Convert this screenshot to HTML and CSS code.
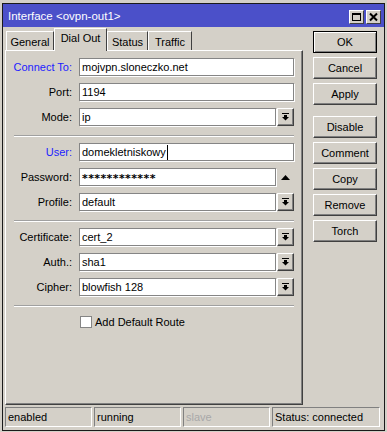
FILE: index.html
```html
<!DOCTYPE html>
<html>
<head>
<meta charset="utf-8">
<link rel="stylesheet" href="styles.css">
</head>
<body>
<div class="desk">
  <div class="window">
    <div class="titlebar">
      <span class="title">Interface &lt;ovpn-out1&gt;</span>
      <div class="tb-btns">
        <span class="tb-btn"><svg width="13" height="12" viewBox="0 0 13 12"><rect x="2.5" y="2.5" width="8" height="7" fill="none" stroke="#000"/><rect x="2" y="2" width="9" height="2" fill="#000"/></svg></span>
        <span class="tb-btn"><svg width="13" height="12" viewBox="0 0 13 12"><path d="M3 2.5 L10 9.5 M10 2.5 L3 9.5" stroke="#000" stroke-width="2"/></svg></span>
      </div>
    </div>
    <div class="main">
      <div class="left">
        <div class="tabs">
          <div class="tab t-general">General</div>
          <div class="tab active t-dial">Dial Out</div>
          <div class="tab t-status">Status</div>
          <div class="tab t-traffic">Traffic</div>
        </div>
        <div class="panel">
          <div class="row"><span class="label blue">Connect To:</span><div class="input">mojvpn.sloneczko.net</div></div>
          <div class="row"><span class="label">Port:</span><div class="input">1194</div></div>
          <div class="row"><span class="label">Mode:</span><div class="input short">ip</div><span class="drop"><svg width="7" height="8" viewBox="0 0 7 8"><rect x="0" y="0" width="7" height="1" fill="#000"/><rect x="2" y="2" width="3" height="2" fill="#000"/><path d="M0 4 H7 L3.5 7.5 Z" fill="#000"/></svg></span></div>
          <div class="sep"></div>
          <div class="row"><span class="label blue">User:</span><div class="input">domekletniskowy<span class="caret"></span></div></div>
          <div class="row"><span class="label">Password:</span><div class="input short pw">************</div><span class="updown"><svg width="9" height="5" viewBox="0 0 9 5"><path d="M0 5 H9 L4.5 0 Z" fill="#000"/></svg></span></div>
          <div class="row"><span class="label">Profile:</span><div class="input short">default</div><span class="drop"><svg width="7" height="8" viewBox="0 0 7 8"><rect x="0" y="0" width="7" height="1" fill="#000"/><rect x="2" y="2" width="3" height="2" fill="#000"/><path d="M0 4 H7 L3.5 7.5 Z" fill="#000"/></svg></span></div>
          <div class="sep"></div>
          <div class="row"><span class="label">Certificate:</span><div class="input short">cert_2</div><span class="drop"><svg width="7" height="8" viewBox="0 0 7 8"><rect x="0" y="0" width="7" height="1" fill="#000"/><rect x="2" y="2" width="3" height="2" fill="#000"/><path d="M0 4 H7 L3.5 7.5 Z" fill="#000"/></svg></span></div>
          <div class="row"><span class="label">Auth.:</span><div class="input short">sha1</div><span class="drop"><svg width="7" height="8" viewBox="0 0 7 8"><rect x="0" y="0" width="7" height="1" fill="#000"/><rect x="2" y="2" width="3" height="2" fill="#000"/><path d="M0 4 H7 L3.5 7.5 Z" fill="#000"/></svg></span></div>
          <div class="row"><span class="label">Cipher:</span><div class="input short">blowfish 128</div><span class="drop"><svg width="7" height="8" viewBox="0 0 7 8"><rect x="0" y="0" width="7" height="1" fill="#000"/><rect x="2" y="2" width="3" height="2" fill="#000"/><path d="M0 4 H7 L3.5 7.5 Z" fill="#000"/></svg></span></div>
          <div class="sep"></div>
          <div class="check-row"><span class="checkbox"></span><span>Add Default Route</span></div>
        </div>
      </div>
      <div class="buttons">
        <div class="btn default">OK</div>
        <div class="btn">Cancel</div>
        <div class="btn">Apply</div>
        <div class="btn spaced">Disable</div>
        <div class="btn">Comment</div>
        <div class="btn">Copy</div>
        <div class="btn">Remove</div>
        <div class="btn">Torch</div>
      </div>
    </div>
    <div class="statusbar">
      <div class="field">enabled</div>
      <div class="field">running</div>
      <div class="field disabled">slave</div>
      <div class="field wide">Status: connected</div>
    </div>
  </div>
</div>
</body>
</html>
```
FILE: styles.css
```css
html, body {
  margin: 0;
  padding: 0;
}
body {
  background: #d4d0c8;
  font: 11px "Liberation Sans", Arial, sans-serif;
  color: #000;
}
.desk {
  padding: 3px 0 0 2px;
  height: 432px;
  box-sizing: border-box;
}
.window {
  width: 383px;
  height: 428px;
  box-sizing: border-box;
  border: 1px solid #1a1a1a;
  background: #d4d0c8;
  display: flex;
  flex-direction: column;
}
.titlebar {
  height: 23px;
  flex: none;
  background: #4b50c9;
  display: flex;
  align-items: center;
  justify-content: space-between;
  padding: 0 3px 0 5px;
}
.title {
  color: #fff;
  font-size: 11.5px;
  margin-top: 1px;
}
.tb-btns {
  display: flex;
  gap: 2px;
  margin-top: 3px;
}
.tb-btn {
  width: 15px;
  height: 14px;
  box-sizing: border-box;
  background: #d4d0c8;
  border: 1px solid;
  border-color: #fff #404040 #404040 #fff;
  display: flex;
  align-items: center;
  justify-content: center;
}
.main {
  display: flex;
  flex: none;
  padding-left: 2px;
}
.left {
  width: 298px;
  display: flex;
  flex-direction: column;
}
.tabs {
  height: 23px;
  display: flex;
  align-items: flex-end;
  padding-left: 1px;
}
.tab {
  height: 19px;
  box-sizing: border-box;
  border: 1px solid;
  border-bottom: none;
  border-color: #fff #404040 transparent #fff;
  display: flex;
  align-items: center;
  justify-content: center;
  padding-top: 1px;
}
.t-general { width: 48px; }
.t-dial { width: 53px; }
.t-status { width: 41px; }
.t-traffic { width: 44px; }
.tab.active {
  height: 23px;
  margin-bottom: -1px;
  position: relative;
  z-index: 1;
  background: #d4d0c8;
  padding-top: 0;
  padding-bottom: 4px;
}
.panel {
  height: 355px;
  box-sizing: border-box;
  border: 1px solid;
  border-color: #fff #404040 #404040 #fff;
  box-shadow: inset -1px -1px #808080;
  padding: 7px 8px 0 0;
  display: flex;
  flex-direction: column;
}
.row {
  display: flex;
  align-items: center;
  height: 18px;
  flex: none;
  margin-bottom: 7px;
}
.label {
  width: 66px;
  margin-right: 7px;
  text-align: right;
  white-space: nowrap;
}
.blue {
  color: #1c1cff;
}
.input {
  width: 215px;
  height: 18px;
  box-sizing: border-box;
  background: #fff;
  border: 1px solid #858585;
  box-shadow: 1px 1px 0 #fff;
  padding-left: 2px;
  display: flex;
  align-items: center;
  white-space: nowrap;
}
.input.short {
  width: 197px;
}
.input.pw {
  font-family: "DejaVu Sans", sans-serif;
  font-weight: bold;
  letter-spacing: 0.4px;
  padding-top: 2px;
}
.caret {
  display: inline-block;
  width: 1px;
  height: 15px;
  background: #000;
  margin-left: 1px;
}
.drop {
  width: 17px;
  height: 18px;
  margin-left: 1px;
  box-sizing: border-box;
  border: 1px solid;
  border-color: #fff #404040 #404040 #fff;
  box-shadow: inset -1px -1px #808080;
  display: flex;
  align-items: center;
  justify-content: center;
}
.updown {
  width: 17px;
  height: 18px;
  margin-left: 1px;
  display: flex;
  align-items: center;
  justify-content: center;
}
.sep {
  flex: none;
  margin: 2px 0 6px 8px;
  border-top: 1px solid #a0a0a0;
  border-bottom: 1px solid #fff;
}
.check-row {
  display: flex;
  align-items: center;
  height: 18px;
  flex: none;
  padding-left: 74px;
  gap: 3px;
}
.checkbox {
  width: 12px;
  height: 12px;
  box-sizing: border-box;
  background: #fff;
  border: 1px solid #858585;
}
.buttons {
  width: 64px;
  margin-left: 10px;
  padding-top: 4px;
  display: flex;
  flex-direction: column;
  gap: 4px;
}
.btn {
  height: 22px;
  box-sizing: border-box;
  border: 1px solid;
  border-color: #fff #404040 #404040 #fff;
  box-shadow: inset -1px -1px #808080;
  display: flex;
  align-items: center;
  justify-content: center;
}
.btn.default {
  border: 1px solid #000;
  box-shadow: inset 1px 1px #fff, inset -1px -1px #808080;
}
.btn.spaced {
  margin-top: 7px;
}
.statusbar {
  display: flex;
  gap: 2px;
  margin-top: 2px;
  padding-left: 2px;
}
.field {
  width: 87px;
  height: 20px;
  box-sizing: border-box;
  border: 1px solid;
  border-color: #808080 #fff #fff #808080;
  padding-left: 2px;
  display: flex;
  align-items: center;
  white-space: nowrap;
}
.field.wide {
  width: 108px;
}
.field.disabled {
  color: #a8a8a8;
}
```
